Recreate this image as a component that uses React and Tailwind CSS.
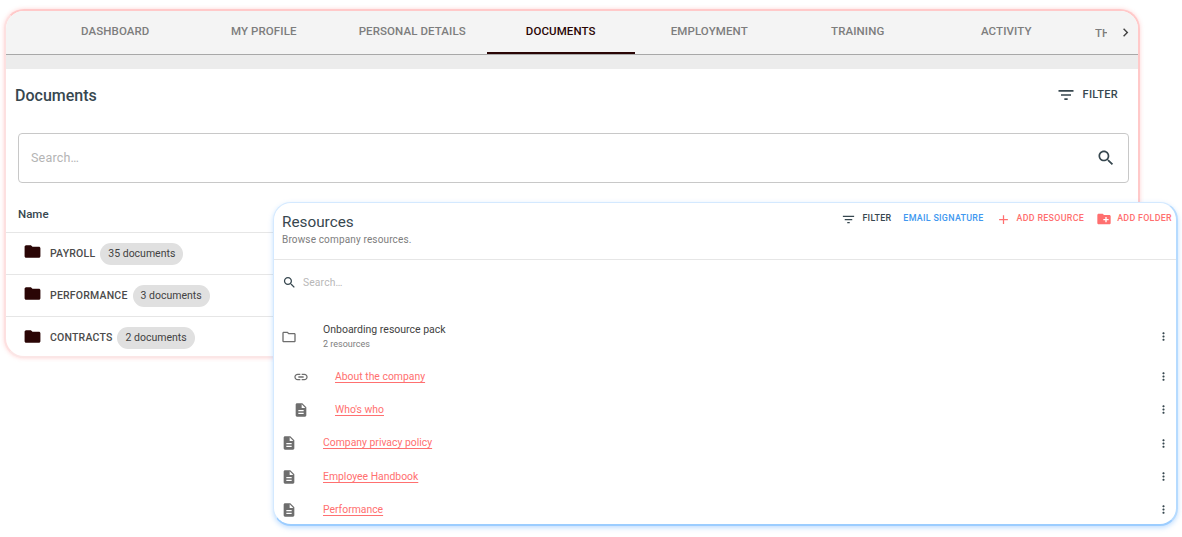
const P = {
  filter: "M10 18h4v-2h-4v2zM3 6v2h18V6H3zm3 7h12v-2H6v2z",
  search: "M15.5 14h-.79l-.28-.27C15.41 12.59 16 11.11 16 9.5 16 5.91 13.09 3 9.5 3S3 5.91 3 9.5 5.91 16 9.5 16c1.61 0 3.09-.59 4.23-1.57l.27.28v.79l5 4.99L20.49 19l-4.99-5zm-6 0C7.01 14 5 11.99 5 9.5S7.01 5 9.5 5 14 7.01 14 9.5 11.99 14 9.5 14z",
  folder: "M10 4H4c-1.1 0-1.99.9-1.99 2L2 18c0 1.1.9 2 2 2h16c1.1 0 2-.9 2-2V8c0-1.1-.9-2-2-2h-8l-2-2z",
  folderO: "M9.17 6l2 2H20v10H4V6h5.17M10 4H4c-1.1 0-1.99.9-1.99 2L2 18c0 1.1.9 2 2 2h16c1.1 0 2-.9 2-2V8c0-1.1-.9-2-2-2h-8l-2-2z",
  link: "M3.9 12c0-1.71 1.39-3.1 3.1-3.1h4V7H7c-2.76 0-5 2.24-5 5s2.24 5 5 5h4v-1.9H7c-1.71 0-3.1-1.39-3.1-3.1zM8 13h8v-2H8v2zm9-6h-4v1.9h4c1.71 0 3.1 1.39 3.1 3.1s-1.39 3.1-3.1 3.1h-4V17h4c2.76 0 5-2.24 5-5s-2.24-5-5-5z",
  doc: "M14 2H6c-1.1 0-1.99.9-1.99 2L4 20c0 1.1.89 2 1.99 2H18c1.1 0 2-.9 2-2V8l-6-6zm2 16H8v-2h8v2zm0-4H8v-2h8v2zm-3-5V3.5L18.5 9H13z",
  more: "M12 8c1.1 0 2-.9 2-2s-.9-2-2-2-2 .9-2 2 .9 2 2 2zm0 2c-1.1 0-2 .9-2 2s.9 2 2 2 2-.9 2-2-.9-2-2-2zm0 6c-1.1 0-2 .9-2 2s.9 2 2 2 2-.9 2-2-.9-2-2-2z",
  add: "M19 13h-6v6h-2v-6H5v-2h6V5h2v6h6v2z",
  newFolder: "M20 6h-8l-2-2H4c-1.11 0-1.99.89-1.99 2L2 18c0 1.11.89 2 2 2h16c1.1 0 2-.89 2-2V8c0-1.11-.89-2-2-2zm-1 8h-3v3h-2v-3h-3v-2h3V9h2v3h3v2z",
  chevron: "M10 6L8.59 7.41 13.17 12l-4.58 4.59L10 18l6-6z",
};

function Icon({ d, className }) {
  return (
    <svg viewBox="0 0 24 24" fill="currentColor" className={className}>
      <path d={d} />
    </svg>
  );
}

const tabs = ["DASHBOARD", "MY PROFILE", "PERSONAL DETAILS", "DOCUMENTS", "EMPLOYMENT", "TRAINING", "ACTIVITY"];

const folders = [
  ["PAYROLL", "35 documents"],
  ["PERFORMANCE", "3 documents"],
  ["CONTRACTS", "2 documents"],
];

function Tabs() {
  return (
    <div className="flex h-[44px] shrink-0 border-b border-[#a8a8a8] bg-[#f4f4f4] pl-[35px]">
      {tabs.map((t) => {
        const active = t === "DOCUMENTS";
        return (
          <div
            key={t}
            className={`flex h-[43px] w-[148.5px] shrink-0 items-center justify-center border-b-2 text-[11.5px] font-medium tracking-[0.1px] ${
              active ? "border-[#2a0505] text-[#2a0505]" : "border-transparent text-[#7d7d7d]"
            }`}
          >
            {t}
          </div>
        );
      })}
    </div>
  );
}

function DocumentsCard() {
  return (
    <div className="ml-[4px] mt-[8px] flex h-[349px] w-[1136px] flex-col overflow-hidden rounded-[20px] border-2 border-[#ffc9c9] border-b-[#fbe6e6] border-l-[#fde0e0] bg-white shadow-[0_0_4px_rgba(255,160,160,0.45)]">
      <div className="relative shrink-0">
        <Tabs />
        <span className="absolute left-[1089px] top-[14px] w-[12px] overflow-hidden whitespace-nowrap text-[11.5px] font-medium tracking-[0.1px] text-[#7d7d7d]">THEMES</span>
        <Icon d={P.chevron} className="absolute left-[1111px] top-[13px] h-[17px] w-[17px] text-[#444]" />
      </div>
      <div className="h-[14px] shrink-0 bg-[#ececec]" />
      <div className="flex h-[52px] shrink-0 items-center justify-between pl-[9px] pr-[20px]">
        <h1 className="mt-[1px] text-[16px] font-medium text-[#37474f]">Documents</h1>
        <div className="flex items-center gap-[7px] text-[#37474f]">
          <Icon d={P.filter} className="-ml-[1px] h-[20px] w-[20px]" />
          <span className="text-[11px] font-medium tracking-[0.3px]">FILTER</span>
        </div>
      </div>
      <div className="ml-[12px] mr-[9px] mt-[12px] flex h-[50px] shrink-0 items-center justify-between rounded-[4px] border border-[#c8c8c8] pl-[12px] pr-[12px]">
        <span className="mt-[1px] text-[12.5px] tracking-[0.2px] text-[#b4b4b4]">Search…</span>
        <Icon d={P.search} className="h-[20px] w-[20px] text-[#37474f]" />
      </div>
      <div className="flex h-[50px] shrink-0 items-center border-b border-[#e6e6e6] pl-[12px] pt-[15px] text-[11.5px] font-medium text-[#37474f]">
        Name
      </div>
      {folders.map(([name, count]) => (
        <div key={name} className="flex h-[42px] shrink-0 items-center border-b border-[#e6e6e6] pl-[17px] last:border-b-0">
          <Icon d={P.folder} className="-mt-[4px] h-[19px] w-[19px] shrink-0 text-[#2a0505]" />
          <span className="ml-[8px] text-[10.5px] font-medium tracking-[0.2px] text-[#4b4b4b]">{name}</span>
          <span className="ml-[5px] flex h-[22px] items-center rounded-full bg-[#e0e0e0] px-[8px] text-[10.5px] text-[#424242]">{count}</span>
        </div>
      ))}
    </div>
  );
}

function ActionButton({ icon, iconClass, label, className }) {
  return (
    <div className={`flex items-center text-[8.9px] font-medium tracking-[0.3px] ${className}`}>
      {icon && <Icon d={icon} className={iconClass} />}
      <span>{label}</span>
    </div>
  );
}

function ResRow({ icon, label, indent }) {
  return (
    <div className={`flex h-[33.3px] shrink-0 items-center pr-[6px] ${indent ? "pl-[19px]" : "pl-[7px]"}`}>
      <Icon d={icon} className="h-[16px] w-[16px] shrink-0 text-[#6e6e6e]" />
      <span className="ml-[26px] text-[10.4px] text-[#ff7070] underline underline-offset-2">{label}</span>
      <Icon d={P.more} className="ml-auto h-[13px] w-[13px] shrink-0 text-[#37474f]" />
    </div>
  );
}

function ResourcesCard() {
  return (
    <div className="absolute left-[273px] top-[202px] flex h-[324px] w-[905px] flex-col overflow-hidden rounded-[18px] border border-[#d4e9ff] border-b-2 border-r-2 border-b-[#9ccdff] border-r-[#b6dbff] bg-white shadow-[0_2px_5px_rgba(120,185,255,0.45)]">
      <div className="flex h-[57px] shrink-0 items-start justify-between border-b border-[#e6e6e6] pl-[8px] pr-[4px]">
        <div className="pt-[9px]">
          <div className="pt-[1px] text-[15.3px] leading-[19px] text-[#37474f]">Resources</div>
          <div className="mt-[2px] text-[10px] leading-[12px] tracking-[0.15px] text-[#7d7d7d]">Browse company resources.</div>
        </div>
        <div className="flex items-center pt-[8px]">
          <ActionButton icon={P.filter} iconClass="mr-[6px] h-[15px] w-[15px]" label="FILTER" className="text-[#37474f]" />
          <ActionButton label="EMAIL SIGNATURE" className="ml-[12px] text-[#4098f0]" />
          <ActionButton icon={P.add} iconClass="mr-[6px] h-[15px] w-[15px]" label="ADD RESOURCE" className="ml-[12px] text-[#ff6f6f]" />
          <ActionButton icon={P.newFolder} iconClass="mr-[5px] h-[16px] w-[16px]" label="ADD FOLDER" className="ml-[12px] text-[#ff6f6f]" />
        </div>
      </div>
      <div className="flex h-[45px] shrink-0 items-center pl-[8px]">
        <Icon d={P.search} className="h-[15px] w-[15px] shrink-0 text-[#37474f]" />
        <span className="ml-[6px] text-[10.3px] tracking-[0.15px] text-[#b8b8b8]">Search…</span>
      </div>
      <div className="mt-[8px] flex h-[47px] shrink-0 items-center pl-[7px] pr-[6px]">
        <Icon d={P.folderO} className="h-[16px] w-[16px] shrink-0 text-[#6e6e6e]" />
        <div className="ml-[26px]">
          <div className="text-[10.5px] leading-[14px] text-[#424242]">Onboarding resource pack</div>
          <div className="text-[9px] leading-[14px] text-[#7d7d7d]">2 resources</div>
        </div>
        <Icon d={P.more} className="ml-auto h-[13px] w-[13px] shrink-0 text-[#37474f]" />
      </div>
      <ResRow icon={P.link} label="About the company" indent />
      <ResRow icon={P.doc} label="Who's who" indent />
      <ResRow icon={P.doc} label="Company privacy policy" />
      <ResRow icon={P.doc} label="Employee Handbook" />
      <ResRow icon={P.doc} label="Performance" />
    </div>
  );
}

export default function App() {
  return (
    <div className="relative h-[537px] w-[1182px] overflow-hidden bg-white font-['Roboto',sans-serif]">
      <div className="h-[1px]" />
      <DocumentsCard />
      <ResourcesCard />
    </div>
  );
}
